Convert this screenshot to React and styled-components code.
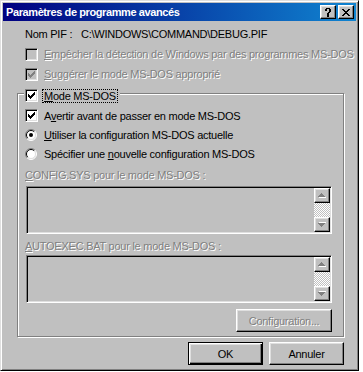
import React from 'react';
import styled, { createGlobalStyle } from 'styled-components';

const GlobalStyle = createGlobalStyle`
  html, body { margin: 0; padding: 0; background: #fff; }
  body {
    font-family: "Liberation Sans", Arial, sans-serif;
    font-size: 11px;
    letter-spacing: -0.25px;
    color: #000;
  }
`;

const Window = styled.div`
  box-sizing: border-box;
  width: 359px;
  height: 371px;
  background: #c0c0c0;
  border: 1px solid;
  border-color: #dfdfdf #000 #000 #dfdfdf;
  box-shadow: inset 1px 1px #fff, inset -1px -1px #808080;
  padding: 2px;
  display: flex;
  flex-direction: column;
`;

const TitleBar = styled.div`
  height: 18px;
  display: flex;
  align-items: center;
  padding: 0 2px 0 3px;
  background: linear-gradient(90deg, #000080, #1084d0);
`;

const Title = styled.span`
  color: #fff;
  font-weight: bold;
  font-size: 11px;
  letter-spacing: -0.4px;
`;

const TitleButtons = styled.div`
  margin-left: auto;
  display: flex;
  gap: 2px;
`;

const Raised = `
  box-sizing: border-box;
  background: #c0c0c0;
  border: 1px solid;
  border-color: #fff #000 #000 #fff;
  box-shadow: inset -1px -1px #808080, inset 1px 1px #dfdfdf;
`;

const CaptionButton = styled.div`
  ${Raised}
  width: 16px;
  height: 14px;
  display: flex;
  align-items: center;
  justify-content: center;
`;

const Content = styled.div`
  display: flex;
  flex-direction: column;
  padding: 0 12px 0 14px;
`;

const InfoRow = styled.div`
  height: 14px;
  margin-top: 6px;
  padding-left: 8px;
  display: flex;
  align-items: center;
`;

const InfoLabel = styled.span`
  width: 56px;
`;

const Row = styled.div`
  height: ${p => p.$h}px;
  margin-top: ${p => p.$mt || 0}px;
  padding-left: ${p => p.$pl || 0}px;
  display: flex;
  align-items: center;
`;

const Text = styled.span`
  margin-left: ${p => p.$ml || 0}px;
  white-space: nowrap;
  color: ${p => (p.$disabled ? '#808080' : '#000')};
  text-shadow: ${p => (p.$disabled ? '1px 1px 0 #fff' : 'none')};
`;

const Key = styled.span`
  text-decoration: underline;
  text-underline-offset: 1px;
`;

const Box = styled.div`
  box-sizing: border-box;
  width: 13px;
  height: 13px;
  flex: none;
  border: 1px solid;
  border-color: #808080 #fff #fff #808080;
  box-shadow: inset 1px 1px #000, inset -1px -1px #dfdfdf;
  background: ${p => (p.$disabled ? '#c0c0c0' : '#fff')};
  display: flex;
  align-items: center;
  justify-content: center;
`;

const Group = styled.div`
  margin-top: 9px;
  border: 1px solid #808080;
  box-shadow: inset 1px 1px #fff, 1px 1px #fff;
  padding: 0 11px 4px 7px;
  display: flex;
  flex-direction: column;
`;

const Legend = styled.div`
  align-self: flex-start;
  margin: -5px 0 0 -1px;
  padding: 0 2px 0 1px;
  height: 13px;
  background: #c0c0c0;
  display: flex;
  align-items: center;
`;

const Focus = styled.span`
  margin-left: 4px;
  padding: 0 1px;
  line-height: 12px;
  border: 1px dotted #000;
`;

const FieldLabel = styled.div`
  height: 14px;
  margin-top: ${p => p.$mt}px;
  display: flex;
  align-items: center;
  color: #808080;
  text-shadow: 1px 1px 0 #fff;
  white-space: nowrap;
`;

const Field = styled.div`
  box-sizing: border-box;
  height: 48px;
  margin: ${p => p.$mt}px 0 0 1px;
  border: 1px solid;
  border-color: #808080 #fff #fff #808080;
  box-shadow: inset 1px 1px #000, inset -1px -1px #dfdfdf;
  background: #c0c0c0;
  padding: 1px;
  display: flex;
  justify-content: flex-end;
`;

const ScrollBar = styled.div`
  width: 16px;
  display: flex;
  flex-direction: column;
`;

const ScrollButton = styled.div`
  ${Raised}
  height: 15px;
  display: flex;
  align-items: center;
  justify-content: center;
`;

const Track = styled.div`
  flex: 1;
  background: repeating-conic-gradient(#c0c0c0 0 25%, #fff 0 50%) 0 0 / 2px 2px;
`;

const PushButton = styled.div`
  ${Raised}
  width: ${p => p.$w}px;
  height: 23px;
  display: flex;
  align-items: center;
  justify-content: center;
  white-space: nowrap;
  ${p =>
    p.$default &&
    `
    border-color: #000;
    box-shadow: inset 1px 1px #fff, inset -1px -1px #000, inset -2px -2px #808080, inset 2px 2px #dfdfdf;
  `}
`;

const ConfigRow = styled.div`
  margin-top: 6px;
  display: flex;
  justify-content: flex-end;
`;

const ButtonRow = styled.div`
  margin-top: 5px;
  display: flex;
  justify-content: flex-end;
  gap: 6px;
`;

const Check = ({ color = '#000' }) => (
  <svg width="7" height="7" viewBox="0 0 7 7" shapeRendering="crispEdges">
    <path
      fill={color}
      d="M6 0h1v3h-1v1h-1v1h-1v1h-1v1h-1v-1h-1v-1h-1v-3h1v1h1v1h1v-1h1v-1h1z"
    />
  </svg>
);

const CheckBox = ({ checked, disabled }) => (
  <Box $disabled={disabled}>{checked && <Check color={disabled ? '#808080' : '#000'} />}</Box>
);

const Radio = ({ checked }) => (
  <svg width="12" height="12" viewBox="0 0 12 12" style={{ flex: 'none' }}>
    <circle cx="6" cy="6" r="5" fill="#fff" />
    <path d="M2.1 9.9A5.5 5.5 0 0 1 9.9 2.1" stroke="#808080" fill="none" />
    <path d="M9.9 2.1A5.5 5.5 0 0 1 2.1 9.9" stroke="#fff" fill="none" />
    <path d="M2.8 9.2A4.5 4.5 0 0 1 9.2 2.8" stroke="#000" fill="none" />
    <path d="M9.2 2.8A4.5 4.5 0 0 1 2.8 9.2" stroke="#dfdfdf" fill="none" />
    {checked && <circle cx="6" cy="6" r="2" fill="#000" />}
  </svg>
);

const Arrow = ({ down }) => (
  <svg width="8" height="5" viewBox="0 0 8 5" shapeRendering="crispEdges">
    <g transform={down ? 'translate(0 5) scale(1 -1)' : undefined}>
      <path fill="#fff" d="M4 1h1v1h1v1h1v1h1v1h-7v-1h1v-1h1v-1h1z" />
      <path fill="#808080" d="M3 0h1v1h1v1h1v1h1v1h-7v-1h1v-1h1v-1h1z" />
    </g>
  </svg>
);

const ScrollField = ({ mt }) => (
  <Field $mt={mt}>
    <ScrollBar>
      <ScrollButton>
        <Arrow />
      </ScrollButton>
      <Track />
      <ScrollButton>
        <Arrow down />
      </ScrollButton>
    </ScrollBar>
  </Field>
);

export default function App() {
  return (
    <>
      <GlobalStyle />
      <Window>
        <TitleBar>
          <Title>Paramètres de programme avancés</Title>
          <TitleButtons>
            <CaptionButton>
              <svg width="6" height="9" viewBox="0 0 6 9" shapeRendering="crispEdges">
                <path fill="#000" d="M1 0h4v1h1v3h-1v1h-1v2h-2v-2h1v-1h1v-3h-2v2h-2v-2h1z M2 7h2v2h-2z" />
              </svg>
            </CaptionButton>
            <CaptionButton>
              <svg width="8" height="7" viewBox="0 0 8 7" shapeRendering="crispEdges">
                <path
                  fill="#000"
                  d="M0 0h2v1h1v1h2v-1h1v-1h2v1h-1v1h-1v1h-1v1h1v1h1v1h1v1h-2v-1h-1v-1h-2v1h-1v1h-2v-1h1v-1h1v-1h1v-1h-1v-1h-1v-1h-1z"
                />
              </svg>
            </CaptionButton>
          </TitleButtons>
        </TitleBar>

        <Content>
          <InfoRow>
            <InfoLabel>Nom PIF :</InfoLabel>
            <span>C:\WINDOWS\COMMAND\DEBUG.PIF</span>
          </InfoRow>

          <Row $h={20} $mt={3} $pl={8}>
            <CheckBox disabled />
            <Text $ml={6} $disabled>
              <Key>E</Key>mpêcher la détection de Windows par des programmes MS-DOS
            </Text>
          </Row>
          <Row $h={20} $pl={8}>
            <CheckBox checked disabled />
            <Text $ml={6} $disabled>
              <Key>S</Key>uggérer le mode MS-DOS approprié
            </Text>
          </Row>

          <Group>
            <Legend>
              <CheckBox checked />
              <Focus>
                <Key>M</Key>ode MS-DOS
              </Focus>
            </Legend>

            <Row $h={19} $mt={4}>
              <CheckBox checked />
              <Text $ml={6}>
                A<Key>v</Key>ertir avant de passer en mode MS-DOS
              </Text>
            </Row>
            <Row $h={19}>
              <Radio checked />
              <Text $ml={7}>
                <Key>U</Key>tiliser la configuration MS-DOS actuelle
              </Text>
            </Row>
            <Row $h={19}>
              <Radio />
              <Text $ml={7}>
                Spécifier une <Key>n</Key>ouvelle configuration MS-DOS
              </Text>
            </Row>

            <FieldLabel $mt={5}>
              <span>
                <Key>C</Key>ONFIG.SYS pour le mode MS-DOS :
              </span>
            </FieldLabel>
            <ScrollField mt={4} />

            <FieldLabel $mt={5}>
              <span>
                <Key>A</Key>UTOEXEC.BAT pour le mode MS-DOS :
              </span>
            </FieldLabel>
            <ScrollField mt={2} />

            <ConfigRow>
              <PushButton $w={96}>
                <Text $disabled>
                  Confi<Key>g</Key>uration...
                </Text>
              </PushButton>
            </ConfigRow>
          </Group>

          <ButtonRow>
            <PushButton $w={75} $default>
              OK
            </PushButton>
            <PushButton $w={75}>Annuler</PushButton>
          </ButtonRow>
        </Content>
      </Window>
    </>
  );
}
